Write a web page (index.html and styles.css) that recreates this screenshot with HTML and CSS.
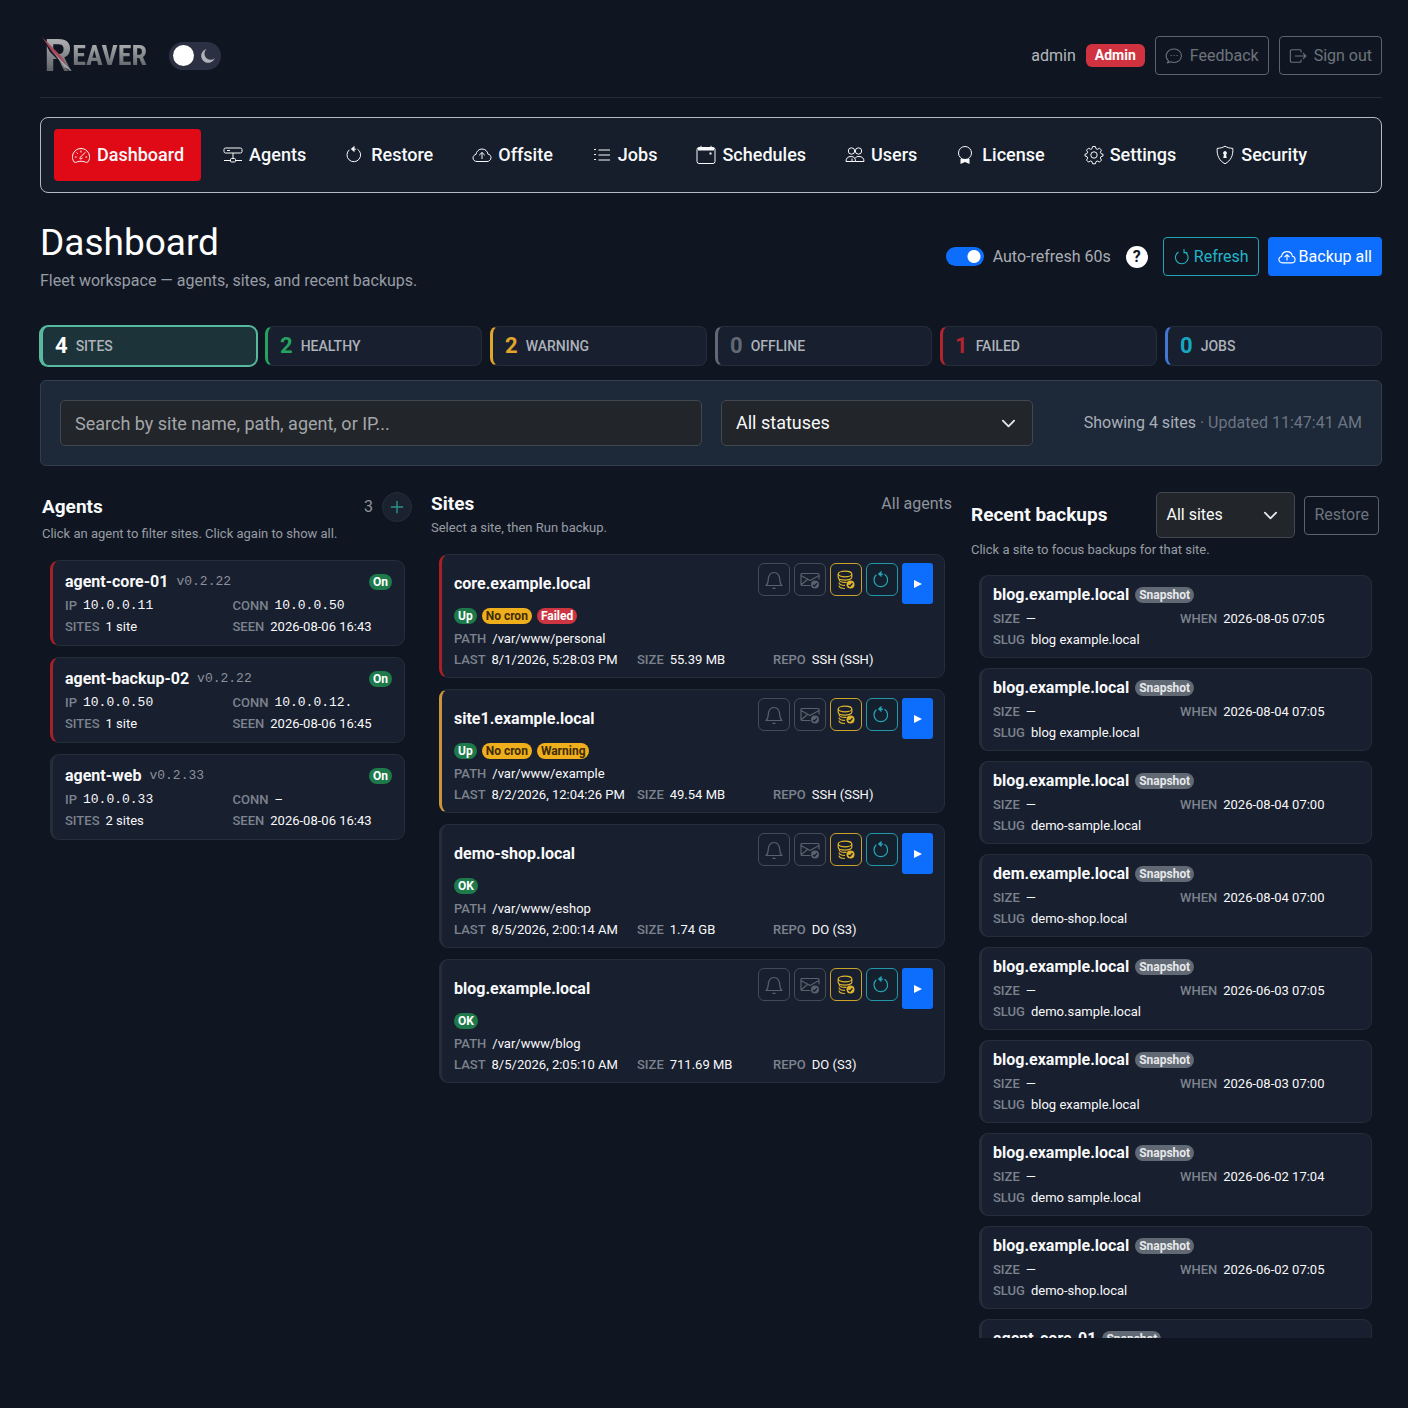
FILE: index.html
```html
<!DOCTYPE html>
<html lang="en">
<head>
<meta charset="utf-8">
<meta name="viewport" content="width=device-width, initial-scale=1">
<title>Reaver – Dashboard</title>
<link rel="stylesheet" href="styles.css">
</head>
<body>
<svg class="sprite" aria-hidden="true">
  <symbol id="i-gauge" viewBox="0 0 20 20"><path d="M3.2 17C1 14.500 1 10.500 2.600 7.800 4.200 5 7 3.500 10 3.500s5.800 1.500 7.400 4.300c1.600 2.700 1.600 6.700-.6 9.200-1 .8-2 .3-3-.1-2.500-.9-5.100-.9-7.600 0-1 .4-2 .9-3 .1z"/><path d="M10 5.500v2M5.500 7.500l1.300 1.300M3.800 12h1.800M14.400 12h1.800M9 12.500l5.500-5.200M8.500 12.800a1.300 1.300 0 1 0 2.600-.3"/></symbol>
  <symbol id="i-network" viewBox="0 0 20 20"><rect x="1" y="3" width="18" height="5" rx="1.500"/><path d="M4 5.500h3M10 8v6M1 15.500h6.500M12.500 15.500H19"/><rect x="7.500" y="13.500" width="5" height="3.500" rx="1"/></symbol>
  <symbol id="i-restore" viewBox="0 0 20 20"><path d="M4.300 4.800a6.800 6.800 0 1 0 8.200-.6"/><path d="M8 4.200h3"/><path class="solid" d="M9.500.8v6.400L5.800 4z"/></symbol>
  <symbol id="i-refresh" viewBox="0 0 20 20"><path d="M6.200 4.500a7 7 0 1 0 6.500-.3"/><path d="M12.200 1v4.200h4"/></symbol>
  <symbol id="i-cloud" viewBox="0 0 20 20"><path d="M5 16.500c-2.300 0-4-1.600-4-3.600 0-1.800 1.300-3.200 3-3.500C4.400 6.300 6.900 4 10 4c3.100 0 5.600 2.200 5.900 5.100 1.800.2 3.100 1.600 3.100 3.600 0 2.100-1.800 3.800-4 3.800z"/><path d="M10 14V7.500M7.200 10.200L10 7.500l2.800 2.700"/></symbol>
  <symbol id="i-list" viewBox="0 0 20 20"><path d="M6.500 5H18M6.500 10H18M6.500 15H18M2 4.500h2M2 9.500h2M2 14.500h2"/></symbol>
  <symbol id="i-calendar" viewBox="0 0 20 20"><rect x="1" y="2.500" width="18" height="16" rx="2"/><path class="solid" d="M2 3h16v2.500H2zM13.500 7.500h2v2h-2z"/><path d="M5 .8v2M15 .8v2"/></symbol>
  <symbol id="i-users" viewBox="0 0 20 20"><circle cx="6.500" cy="6" r="3.200"/><circle cx="13.500" cy="6" r="3.200"/><path d="M1 16.500c0-3.500 2-5 5-5s4.500 1.500 4.500 5zM7 16.500v-3M10.500 16.500H19c0-3.500-2-5-5-5-1.500 0-2.800.3-3.700 1.300"/></symbol>
  <symbol id="i-award" viewBox="0 0 20 20"><circle cx="9" cy="8" r="6.500"/><path class="solid" d="M4.500 14h9v5L9 17l-4.500 2z"/></symbol>
  <symbol id="i-gear" viewBox="0 0 20 20"><circle cx="10" cy="10" r="3.200"/><path d="M8.600 1.500h2.800l.6 2.200 1.500.6 2-1.100 2 2-1.200 2 .7 1.400 2 .6v1.800l-2 .6-.7 1.500 1.200 2-2 2-2-1.100-1.500.6-.6 2.200H8.600L8 16.600 6.500 16l-2 1.100-2-2 1.200-2-.7-1.500-2-.6V9.200l2-.6.7-1.400-1.200-2 2-2 2 1.100L8 3.700z"/></symbol>
  <symbol id="i-shield" viewBox="0 0 20 20"><path d="M10 1.200c2.500 1.500 5 2 7.800 2.200.6 6.800-2 12.400-7.800 15.400C4.200 15.800 1.600 10.200 2.200 3.400 5 3.200 7.500 2.700 10 1.200z"/><path class="solid" d="M10 6a2 2 0 0 1 1.100 3.600l.6 3.400H8.300l.6-3.400A2 2 0 0 1 10 6z"/></symbol>
  <symbol id="i-chat" viewBox="0 0 20 20"><path d="M4 15.800C1.200 13 .6 9 2.600 6 4.600 3 8 2 11 2.300c4.500.5 7.500 4 7.200 8-.3 4.500-4.200 7-8.200 6.900-1.200 0-2.300-.3-3.300-.7L2.500 17.700z"/><path d="M6.200 9.500h1.300M9.500 9.500h1.300M12.800 9.500h1.300"/></symbol>
  <symbol id="i-exit" viewBox="0 0 20 20"><path d="M13.500 6V4.500A1.500 1.500 0 0 0 12 3H3a1.500 1.500 0 0 0-1.500 1.500v11A1.500 1.500 0 0 0 3 17h9a1.500 1.500 0 0 0 1.500-1.500V14M6.500 10h12M15.500 6.800l3.200 3.200-3.200 3.200"/></symbol>
  <symbol id="i-bell" viewBox="0 0 20 20"><path d="M2 15.500h16c-1.500-1-2-2.500-2.200-5.500C15.500 5.500 14 2.500 10 2.500S4.500 5.500 4.200 10C4 13 3.500 14.500 2 15.500zM8.500 18.300h3"/></symbol>
  <symbol id="i-mail" viewBox="0 0 20 20"><path d="M10.500 15.500H2a1 1 0 0 1-1-1v-10a1 1 0 0 1 1-1h16a1 1 0 0 1 1 1v5M1 5.500l9 5 9-5M1.500 14.500l6-5"/><circle class="solid" cx="15" cy="14.500" r="4"/><path class="cut" d="M13 15l1.400 1.200 2.600-3"/></symbol>
  <symbol id="i-stack" viewBox="0 0 20 20"><ellipse cx="9" cy="4" rx="6.800" ry="2.800"/><path d="M2.200 4v3.200C2.200 11 15.800 11 15.800 7.200V4M3 9.500c0 2.500 4 3.300 7.500 2.800M3 12.500c0 2.200 3 3 6 2.900M3 15.500c0 2.200 3 3 6 3"/><circle class="solid" cx="14.500" cy="14.500" r="4"/><path class="cut" d="M12.500 15l1.400 1.200 2.600-3"/></symbol>
</svg>

<div class="page">
  <header class="topbar">
    <a class="logo" href="#" aria-label="Reaver"><span class="logo-initial">R</span><span class="logo-rest">EAVER</span>
      <svg class="logo-slash" viewBox="0 0 32 36" aria-hidden="true"><path d="M0 0L18 19l10 16L8 15z" fill="#101621"/><path d="M0 0l19 19 6 10L11 16z" fill="#a9485a"/><path d="M12 16l18 18-8-4z" fill="#a4a4a6"/></svg>
    </a>
    <button class="theme" type="button" aria-label="Toggle theme"><span class="theme-knob"></span><svg viewBox="0 0 16 16" aria-hidden="true"><path d="M6.500 1A6 6 0 0 0 14.800 10.200 7 7 0 1 1 6.500 1z" fill="#aeb2b9"/></svg></button>
    <div class="account">
      <span class="user">admin</span>
      <span class="role">Admin</span>
      <button class="btn btn-outline" type="button"><svg class="icon"><use href="#i-chat"/></svg>Feedback</button>
      <button class="btn btn-outline" type="button"><svg class="icon"><use href="#i-exit"/></svg>Sign out</button>
    </div>
  </header>

  <nav class="nav" aria-label="Main">
    <a class="nav-item active" href="#"><svg class="icon"><use href="#i-gauge"/></svg>Dashboard</a>
    <a class="nav-item" href="#"><svg class="icon"><use href="#i-network"/></svg>Agents</a>
    <a class="nav-item" href="#"><svg class="icon"><use href="#i-restore"/></svg>Restore</a>
    <a class="nav-item" href="#"><svg class="icon"><use href="#i-cloud"/></svg>Offsite</a>
    <a class="nav-item" href="#"><svg class="icon"><use href="#i-list"/></svg>Jobs</a>
    <a class="nav-item" href="#"><svg class="icon"><use href="#i-calendar"/></svg>Schedules</a>
    <a class="nav-item" href="#"><svg class="icon"><use href="#i-users"/></svg>Users</a>
    <a class="nav-item" href="#"><svg class="icon"><use href="#i-award"/></svg>License</a>
    <a class="nav-item" href="#"><svg class="icon"><use href="#i-gear"/></svg>Settings</a>
    <a class="nav-item" href="#"><svg class="icon"><use href="#i-shield"/></svg>Security</a>
  </nav>

  <main>
    <div class="page-head">
      <div>
        <h1>Dashboard</h1>
        <p class="lead">Fleet workspace — agents, sites, and recent backups.</p>
      </div>
      <div class="actions">
        <label class="switch"><input type="checkbox" checked>Auto-refresh 60s</label>
        <button class="help" type="button" aria-label="Help">?</button>
        <button class="btn btn-info" type="button"><svg class="icon"><use href="#i-refresh"/></svg>Refresh</button>
        <button class="btn btn-primary" type="button"><svg class="icon"><use href="#i-cloud"/></svg>Backup all</button>
      </div>
    </div>

    <div class="stats">
      <button class="stat selected" type="button"><b>4</b><span>Sites</span></button>
      <button class="stat healthy" type="button"><b>2</b><span>Healthy</span></button>
      <button class="stat warning" type="button"><b>2</b><span>Warning</span></button>
      <button class="stat offline" type="button"><b>0</b><span>Offline</span></button>
      <button class="stat failed" type="button"><b>1</b><span>Failed</span></button>
      <button class="stat jobs" type="button"><b>0</b><span>Jobs</span></button>
    </div>

    <div class="filters">
      <input class="field" type="search" aria-label="Search sites" placeholder="Search by site name, path, agent, or IP...">
      <select class="field" aria-label="Status"><option>All statuses</option></select>
      <p class="summary">Showing 4 sites <span>· Updated 11:47:41 AM</span></p>
    </div>

    <div class="columns">
      <section class="col-agents">
        <div class="col-head"><h2>Agents</h2><span class="count">3</span><button class="add" type="button" aria-label="Add agent"><svg viewBox="0 0 16 16"><path d="M8 1v14M1 8h14"/></svg></button></div>
        <p class="hint">Click an agent to filter sites. Click again to show all.</p>
        <div class="list">
          <article class="card is-failed">
            <div class="card-title"><h3>agent-core-01</h3><code>v0.2.22</code><span class="badge ok end">On</span></div>
            <dl class="meta two"><div><dt>IP</dt><dd class="mono">10.0.0.11</dd></div><div><dt>Conn</dt><dd class="mono">10.0.0.50</dd></div><div><dt>Sites</dt><dd>1 site</dd></div><div><dt>Seen</dt><dd>2026-08-06 16:43</dd></div></dl>
          </article>
          <article class="card is-failed">
            <div class="card-title"><h3>agent-backup-02</h3><code>v0.2.22</code><span class="badge ok end">On</span></div>
            <dl class="meta two"><div><dt>IP</dt><dd class="mono">10.0.0.50</dd></div><div><dt>Conn</dt><dd class="mono">10.0.0.12.</dd></div><div><dt>Sites</dt><dd>1 site</dd></div><div><dt>Seen</dt><dd>2026-08-06 16:45</dd></div></dl>
          </article>
          <article class="card">
            <div class="card-title"><h3>agent-web</h3><code>v0.2.33</code><span class="badge ok end">On</span></div>
            <dl class="meta two"><div><dt>IP</dt><dd class="mono">10.0.0.33</dd></div><div><dt>Conn</dt><dd>–</dd></div><div><dt>Sites</dt><dd>2 sites</dd></div><div><dt>Seen</dt><dd>2026-08-06 16:43</dd></div></dl>
          </article>
        </div>
      </section>

      <section class="col-sites">
        <div class="col-head"><h2>Sites</h2><span class="count">All agents</span></div>
        <p class="hint">Select a site, then Run backup.</p>
        <div class="list">
          <article class="card site is-failed">
            <div class="site-head"><h3>core.example.local</h3>
              <div class="tools"><button class="tool" type="button" aria-label="Alerts"><svg class="icon"><use href="#i-bell"/></svg></button><button class="tool" type="button" aria-label="Mail"><svg class="icon"><use href="#i-mail"/></svg></button><button class="tool gold" type="button" aria-label="Storage"><svg class="icon"><use href="#i-stack"/></svg></button><button class="tool cyan" type="button" aria-label="Restore"><svg class="icon"><use href="#i-restore"/></svg></button><button class="run" type="button" aria-label="Run backup"><svg viewBox="0 0 8 8"><path d="M0 0l8 4-8 4z"/></svg></button></div></div>
            <div class="badges"><span class="badge ok">Up</span><span class="badge warn">No cron</span><span class="badge fail">Failed</span></div>
            <dl class="meta three"><div class="wide"><dt>Path</dt><dd>/var/www/personal</dd></div><div><dt>Last</dt><dd>8/1/2026, 5:28:03 PM</dd></div><div><dt>Size</dt><dd>55.39 MB</dd></div><div><dt>Repo</dt><dd>SSH (SSH)</dd></div></dl>
          </article>
          <article class="card site is-warning">
            <div class="site-head"><h3>site1.example.local</h3>
              <div class="tools"><button class="tool" type="button" aria-label="Alerts"><svg class="icon"><use href="#i-bell"/></svg></button><button class="tool" type="button" aria-label="Mail"><svg class="icon"><use href="#i-mail"/></svg></button><button class="tool gold" type="button" aria-label="Storage"><svg class="icon"><use href="#i-stack"/></svg></button><button class="tool cyan" type="button" aria-label="Restore"><svg class="icon"><use href="#i-restore"/></svg></button><button class="run" type="button" aria-label="Run backup"><svg viewBox="0 0 8 8"><path d="M0 0l8 4-8 4z"/></svg></button></div></div>
            <div class="badges"><span class="badge ok">Up</span><span class="badge warn">No cron</span><span class="badge warn">Warning</span></div>
            <dl class="meta three"><div class="wide"><dt>Path</dt><dd>/var/www/example</dd></div><div><dt>Last</dt><dd>8/2/2026, 12:04:26 PM</dd></div><div><dt>Size</dt><dd>49.54 MB</dd></div><div><dt>Repo</dt><dd>SSH (SSH)</dd></div></dl>
          </article>
          <article class="card site">
            <div class="site-head"><h3>demo-shop.local</h3>
              <div class="tools"><button class="tool" type="button" aria-label="Alerts"><svg class="icon"><use href="#i-bell"/></svg></button><button class="tool" type="button" aria-label="Mail"><svg class="icon"><use href="#i-mail"/></svg></button><button class="tool gold" type="button" aria-label="Storage"><svg class="icon"><use href="#i-stack"/></svg></button><button class="tool cyan" type="button" aria-label="Restore"><svg class="icon"><use href="#i-restore"/></svg></button><button class="run" type="button" aria-label="Run backup"><svg viewBox="0 0 8 8"><path d="M0 0l8 4-8 4z"/></svg></button></div></div>
            <div class="badges"><span class="badge ok">OK</span></div>
            <dl class="meta three"><div class="wide"><dt>Path</dt><dd>/var/www/eshop</dd></div><div><dt>Last</dt><dd>8/5/2026, 2:00:14 AM</dd></div><div><dt>Size</dt><dd>1.74 GB</dd></div><div><dt>Repo</dt><dd>DO (S3)</dd></div></dl>
          </article>
          <article class="card site">
            <div class="site-head"><h3>blog.example.local</h3>
              <div class="tools"><button class="tool" type="button" aria-label="Alerts"><svg class="icon"><use href="#i-bell"/></svg></button><button class="tool" type="button" aria-label="Mail"><svg class="icon"><use href="#i-mail"/></svg></button><button class="tool gold" type="button" aria-label="Storage"><svg class="icon"><use href="#i-stack"/></svg></button><button class="tool cyan" type="button" aria-label="Restore"><svg class="icon"><use href="#i-restore"/></svg></button><button class="run" type="button" aria-label="Run backup"><svg viewBox="0 0 8 8"><path d="M0 0l8 4-8 4z"/></svg></button></div></div>
            <div class="badges"><span class="badge ok">OK</span></div>
            <dl class="meta three"><div class="wide"><dt>Path</dt><dd>/var/www/blog</dd></div><div><dt>Last</dt><dd>8/5/2026, 2:05:10 AM</dd></div><div><dt>Size</dt><dd>711.69 MB</dd></div><div><dt>Repo</dt><dd>DO (S3)</dd></div></dl>
          </article>
        </div>
      </section>

      <section class="col-backups">
        <div class="col-head"><h2>Recent backups</h2><select class="field compact" aria-label="Site"><option>All sites</option></select><button class="btn btn-outline" type="button">Restore</button></div>
        <p class="hint">Click a site to focus backups for that site.</p>
        <div class="list">
          <article class="card"><div class="card-title"><h3>blog.example.local</h3><span class="badge snap">Snapshot</span></div>
            <dl class="meta two"><div><dt>Size</dt><dd>—</dd></div><div><dt>When</dt><dd>2026-08-05 07:05</dd></div><div><dt>Slug</dt><dd>blog example.local</dd></div></dl></article>
          <article class="card"><div class="card-title"><h3>blog.example.local</h3><span class="badge snap">Snapshot</span></div>
            <dl class="meta two"><div><dt>Size</dt><dd>—</dd></div><div><dt>When</dt><dd>2026-08-04 07:05</dd></div><div><dt>Slug</dt><dd>blog example.local</dd></div></dl></article>
          <article class="card"><div class="card-title"><h3>blog.example.local</h3><span class="badge snap">Snapshot</span></div>
            <dl class="meta two"><div><dt>Size</dt><dd>—</dd></div><div><dt>When</dt><dd>2026-08-04 07:00</dd></div><div><dt>Slug</dt><dd>demo-sample.local</dd></div></dl></article>
          <article class="card"><div class="card-title"><h3>dem.example.local</h3><span class="badge snap">Snapshot</span></div>
            <dl class="meta two"><div><dt>Size</dt><dd>—</dd></div><div><dt>When</dt><dd>2026-08-04 07:00</dd></div><div><dt>Slug</dt><dd>demo-shop.local</dd></div></dl></article>
          <article class="card"><div class="card-title"><h3>blog.example.local</h3><span class="badge snap">Snapshot</span></div>
            <dl class="meta two"><div><dt>Size</dt><dd>—</dd></div><div><dt>When</dt><dd>2026-06-03 07:05</dd></div><div><dt>Slug</dt><dd>demo.sample.local</dd></div></dl></article>
          <article class="card"><div class="card-title"><h3>blog.example.local</h3><span class="badge snap">Snapshot</span></div>
            <dl class="meta two"><div><dt>Size</dt><dd>—</dd></div><div><dt>When</dt><dd>2026-08-03 07:00</dd></div><div><dt>Slug</dt><dd>blog example.local</dd></div></dl></article>
          <article class="card"><div class="card-title"><h3>blog.example.local</h3><span class="badge snap">Snapshot</span></div>
            <dl class="meta two"><div><dt>Size</dt><dd>—</dd></div><div><dt>When</dt><dd>2026-06-02 17:04</dd></div><div><dt>Slug</dt><dd>demo sample.local</dd></div></dl></article>
          <article class="card"><div class="card-title"><h3>blog.example.local</h3><span class="badge snap">Snapshot</span></div>
            <dl class="meta two"><div><dt>Size</dt><dd>—</dd></div><div><dt>When</dt><dd>2026-06-02 07:05</dd></div><div><dt>Slug</dt><dd>demo-shop.local</dd></div></dl></article>
          <article class="card"><div class="card-title"><h3>agent-core-01</h3><span class="badge snap">Snapshot</span></div></article>
        </div>
      </section>
    </div>
  </main>
</div>
</body>
</html>
```
FILE: styles.css
```css
:root {
  --bg: #101621;
  --card: #181f2f;
  --line: #252d3b;
  --text: #f8f9fa;
  --muted: #a0a5ad;
  --dim: #6c737d;
}
* { box-sizing: border-box; }
body {
  margin: 0;
  background: var(--bg);
  color: var(--text);
  font: 400 16px/24px Roboto, "Liberation Sans", sans-serif;
}
h1, h2, h3, p, dl, dd { margin: 0; }
button, input, select { font: inherit; color: inherit; margin: 0; }
button { cursor: pointer; }
a { color: inherit; text-decoration: none; }
.sprite { display: none; }
.icon {
  width: 20px;
  height: 20px;
  flex: none;
  fill: none;
  stroke: currentColor;
  stroke-width: 1.2;
  stroke-linejoin: round;
}
.solid { fill: currentColor; stroke: none; }
.cut { stroke: var(--card); stroke-width: 1.3; }

.page { padding: 36px 26px 24px 40px; }

/* Top bar */
.topbar {
  display: flex;
  align-items: center;
  padding-bottom: 22px;
  border-bottom: 1px solid #222c3a;
}
.logo {
  position: relative;
  display: flex;
  align-items: center;
  height: 39px;
  padding-left: 4px;
  font-weight: 700;
}
.logo-initial, .logo-rest {
  background: linear-gradient(#a9abae 15%, #606468 85%);
  -webkit-background-clip: text;
  background-clip: text;
  color: transparent;
}
.logo-initial { font-size: 44px; line-height: 40px; }
.logo-rest { font-family: "Liberation Sans Narrow", "Roboto Condensed", Roboto, sans-serif; font-size: 28px; line-height: 32px; }
.logo-slash { position: absolute; left: 2px; top: 1px; width: 32px; height: 36px; }
.theme {
  display: flex;
  align-items: center;
  gap: 6px;
  width: 52px;
  height: 28px;
  margin-left: 22px;
  padding: 0 4px;
  border: 0;
  border-radius: 14px;
  background: #2b3142;
}
.theme-knob { width: 21px; height: 21px; border-radius: 50%; background: #fff; }
.theme svg { width: 16px; height: 16px; }
.account { display: flex; align-items: center; gap: 10px; margin-left: auto; }
.user { color: #b4b8be; }
.role {
  padding: 0 9px;
  border-radius: 6px;
  background: #d0333f;
  color: #fff;
  font-size: 14px;
  font-weight: 700;
  line-height: 23px;
}
.btn {
  display: inline-flex;
  align-items: center;
  gap: 7px;
  height: 39px;
  padding: 0 9px;
  border: 1px solid transparent;
  border-radius: 4px;
  background: none;
  white-space: nowrap;
}
.btn .icon { width: 18px; height: 18px; }
.btn-outline { border-color: #5c636d; color: #6c737d; }
.btn-info { border-color: #1fa3b5; color: #22b5c9; }
.btn-primary { background: #0d6efd; color: #fff; }

/* Main navigation */
.nav {
  display: flex;
  flex-wrap: wrap;
  gap: 5px;
  margin-top: 19px;
  padding: 11px 13px;
  border: 1px solid #b3bac5;
  border-radius: 8px;
  background: #161e2b;
}
.nav-item {
  display: flex;
  align-items: center;
  gap: 6px;
  height: 52px;
  padding: 0 17px 0 17px;
  border-radius: 4px;
  font-size: 18px;
  font-weight: 500;
}
.nav-item .icon { stroke-width: 1; }
.nav-item.active { background: #e00a17; }

/* Page heading */
.page-head {
  display: flex;
  align-items: center;
  justify-content: space-between;
  margin: 27px 0 33px;
}
h1 { font-size: 37px; font-weight: 400; line-height: 46px; color: #fff; }
.lead { margin-top: 3px; color: #979ca5; }
.actions { display: flex; align-items: center; gap: 9px; }
.actions .btn { gap: 3px; }
.switch { display: flex; align-items: center; gap: 9px; color: #a9adb4; }
.switch input {
  appearance: none;
  width: 38px;
  height: 19px;
  border-radius: 10px;
  background: radial-gradient(circle at 28px 50%, #fff 6px, transparent 7px) #0d6efd;
}
.help {
  width: 22px;
  height: 22px;
  margin: 0 6px;
  padding: 0;
  border: 0;
  border-radius: 50%;
  background: #fff;
  color: #11161f;
  font-weight: 700;
  line-height: 22px;
}

/* Status tiles */
.stats { display: grid; grid-template-columns: repeat(6, 1fr); gap: 8px; }
.stat {
  display: flex;
  align-items: center;
  gap: 8px;
  height: 40px;
  padding: 0 12px;
  border: 1px solid var(--line);
  border-left: 3px solid var(--accent);
  border-radius: 8px;
  background: var(--card);
}
.stat b { font-size: 22px; color: var(--accent); }
.stat span { font-size: 14px; font-weight: 500; text-transform: uppercase; color: #adb2ba; }
.stat.selected { --accent: #58b99f; background: #1b3339; border-color: #58b99f; box-shadow: 0 0 0 1px #58b99f; }
.stat.selected b { color: #fff; }
.healthy { --accent: #25a35f; }
.warning { --accent: #e2a52c; }
.offline { --accent: #626976; }
.failed { --accent: #b0252e; }
.jobs { --accent: #4278d4; }
.stat.jobs b { color: #16a8c2; }

/* Filter panel */
.filters {
  display: grid;
  grid-template-columns: 642fr 312fr 310fr;
  align-items: center;
  gap: 19px;
  margin: 14px 0 26px;
  padding: 19px;
  border: 1px solid #333e4c;
  border-radius: 6px;
  background: #1d2838;
}
.field {
  width: 100%;
  height: 46px;
  padding: 0 14px;
  border: 1px solid #414850;
  border-radius: 5px;
  background: #222529;
  font-size: 18px;
  outline: none;
  appearance: none;
}
.field::placeholder { color: #a3a6aa; opacity: 1; }
select.field {
  background-image: url("data:image/svg+xml,%3Csvg xmlns='http://www.w3.org/2000/svg' viewBox='0 0 16 16' fill='none' stroke='%23e4e6e9' stroke-width='2' stroke-linecap='round' stroke-linejoin='round'%3E%3Cpath d='M2 5l6 6 6-6'/%3E%3C/svg%3E");
  background-repeat: no-repeat;
  background-position: right 16px center;
  background-size: 15px;
}
.summary { text-align: right; color: #a9afb8; white-space: nowrap; }
.summary span { color: #6c7582; }

/* Workspace columns */
.columns { display: grid; grid-template-columns: 372fr 521fr 411fr; align-items: start; gap: 19px; }
.col-agents { padding-left: 2px; }
.col-backups { padding-right: 3px; }
.col-head { display: flex; align-items: center; gap: 9px; }
.col-head h2 { margin-right: auto; font-size: 19px; font-weight: 700; line-height: 24px; white-space: nowrap; }
.count { color: #8d939c; }
.add {
  display: grid;
  place-items: center;
  width: 30px;
  height: 30px;
  padding: 0;
  border: 1px solid #252e3b;
  border-radius: 50%;
  background: #1a2230;
}
.add svg { width: 14px; height: 14px; stroke: #2f9186; stroke-width: 1.6; }
.field.compact { width: 139px; padding: 0 9px; font-size: 16px; }
.hint { margin-top: 2px; color: #979ca5; font-size: 13px; line-height: 20px; }
.list { display: grid; gap: 11px; margin-top: 16px; padding: 0 7px 0 8px; }
.col-backups .list {
  gap: 10px;
  max-height: calc(100vh - 645px);
  margin-top: 15px;
  overflow-y: auto;
  scrollbar-width: none;
}

/* Cards */
.card {
  padding: 10px 12px 8px;
  border: 1px solid var(--line);
  border-left-width: 3px;
  border-radius: 9px;
  background: var(--card);
}
.card.is-failed { border-left-color: #a91f28; }
.card.is-warning { border-left-color: #c9943a; }
.col-backups .card { min-height: 83px; padding: 8px 12px 7px 11px; }
.card.site { padding: 8px 11px 7px 12px; }
.card h3 { font-size: 16px; font-weight: 700; line-height: 22px; }
.card-title { display: flex; align-items: center; gap: 6px; margin-bottom: 2px; }
.card-title code { margin-left: 2px; font: 13px/22px "Liberation Mono", monospace; color: #8b919b; }
.badge {
  padding: 0 4px;
  border-radius: 8px;
  font-size: 12px;
  font-weight: 700;
  line-height: 16px;
  color: #fff;
}
.badge.end { margin-left: auto; }
.badge.ok { background: #1e7a4b; }
.badge.warn { background: #efae1c; color: #3f2c05; }
.badge.fail { background: #cc3541; }
.badge.snap { background: #616974; color: #e6e8ea; }
.badges { display: flex; gap: 5px; margin: 4px 0; }
.meta { display: grid; column-gap: 8px; font-size: 13px; line-height: 21px; }
.meta.two { grid-template-columns: 1fr 1fr; }
.meta.three { grid-template-columns: 175fr 128fr 160fr; }
.meta div { display: flex; gap: 6px; white-space: nowrap; }
.meta .wide { grid-column: 1 / -1; }
.meta dt { font-weight: 500; text-transform: uppercase; color: #7c838e; }
.meta .mono { font-family: "Liberation Mono", monospace; }
.site-head { display: flex; align-items: center; justify-content: space-between; }
.tools { display: flex; align-items: flex-start; gap: 4px; }
.tool {
  display: grid;
  place-items: center;
  width: 32px;
  height: 33px;
  padding: 0;
  border: 1px solid #434b57;
  border-radius: 6px;
  background: none;
  color: #59616c;
}
.tool.gold { border-color: #c9a22b; color: #dfb32c; }
.tool.cyan { border-color: #2398ac; color: #25a5b8; background: #14202d; }
.run {
  display: grid;
  place-items: center;
  width: 31px;
  height: 41px;
  padding: 0;
  border: 0;
  border-radius: 3px;
  background: #0d6efd;
}
.run svg { width: 8px; height: 8px; fill: #fff; }

@media (max-width: 1100px) {
  .columns, .filters { grid-template-columns: 1fr; }
  .stats { grid-template-columns: repeat(3, 1fr); }
}
```
